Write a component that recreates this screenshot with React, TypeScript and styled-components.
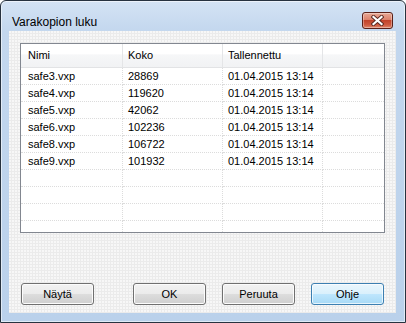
import React from 'react';
import styled, { createGlobalStyle } from 'styled-components';

const GlobalStyle = createGlobalStyle`
  html, body {
    margin: 0;
    padding: 0;
    background: #ffffff;
  }
  * {
    box-sizing: border-box;
  }
`;

const FONT = `"Liberation Sans", Arial, sans-serif`;

const backups = [
  { name: 'safe3.vxp', size: '28869', saved: '01.04.2015 13:14' },
  { name: 'safe4.vxp', size: '119620', saved: '01.04.2015 13:14' },
  { name: 'safe5.vxp', size: '42062', saved: '01.04.2015 13:14' },
  { name: 'safe6.vxp', size: '102236', saved: '01.04.2015 13:14' },
  { name: 'safe8.vxp', size: '106722', saved: '01.04.2015 13:14' },
  { name: 'safe9.vxp', size: '101932', saved: '01.04.2015 13:14' },
];

const Window = styled.div`
  width: 406px;
  height: 323px;
  display: flex;
  flex-direction: column;
  border: 1px solid #27323f;
  border-radius: 6px 6px 0 0;
  background: linear-gradient(180deg, #d4e3f4 0px, #c3d7ee 30px, #bad1eb 100%);
  box-shadow: inset 0 0 0 1px rgba(255, 255, 255, 0.55);
  font-family: ${FONT};
  overflow: hidden;
`;

const TitleBar = styled.div`
  height: 30px;
  flex: none;
  display: flex;
  justify-content: space-between;
  align-items: flex-start;
  padding: 0 12px 0 11px;
`;

const Title = styled.div`
  padding-top: 14px;
  font-size: 12px;
  line-height: 15px;
  color: #000000;
`;

const CloseButton = styled.div`
  margin-top: 11px;
  width: 31px;
  height: 17px;
  border: 1px solid #5a2018;
  border-radius: 3px;
  background: linear-gradient(180deg, #e8a996 0%, #dc826c 45%, #c2432a 50%, #cf5a40 80%, #e08a6e 100%);
  box-shadow: inset 0 0 0 1px rgba(255, 255, 255, 0.35);
  display: flex;
  align-items: center;
  justify-content: center;
`;

const Client = styled.div`
  flex: 1;
  margin: 0 9px 9px 8px;
  background-color: #ebebeb;
  background-image: radial-gradient(circle at 1px 1px, #f8f8f8 0.7px, transparent 0.9px);
  background-size: 3px 3px;
  display: flex;
  flex-direction: column;
  padding: 12px 11px 8px;
`;

const ListBox = styled.div`
  height: 190px;
  flex: none;
  border: 1px solid #828790;
  background: #ffffff;
  overflow: hidden;
`;

const COLUMNS = '102px 100px 100px 1fr';

const HeaderRow = styled.div`
  display: grid;
  grid-template-columns: ${COLUMNS};
  height: 24px;
  border-bottom: 1px solid #e2e3e5;
  background: linear-gradient(180deg, #ffffff 0%, #ffffff 45%, #f6f7f8 46%, #f1f2f4 100%);
`;

const HeaderCell = styled.div<{ $indent: number }>`
  padding-left: ${(p) => p.$indent}px;
  border-right: 1px solid #e4e5e7;
  font-size: 11px;
  line-height: 23px;
  color: #000000;
  white-space: nowrap;
  &:last-child {
    border-right: none;
  }
`;

const Row = styled.div`
  display: grid;
  grid-template-columns: ${COLUMNS};
  height: 17px;
`;

const Cell = styled.div<{ $indent: number }>`
  padding-left: ${(p) => p.$indent}px;
  border-bottom: 1px dotted #dcdcdc;
  border-right: 1px dotted #dcdcdc;
  font-size: 11px;
  line-height: 16px;
  color: #000000;
  white-space: nowrap;
  &:last-child {
    border-right: none;
  }
`;

const ButtonRow = styled.div`
  margin-top: auto;
  padding: 0 1px;
  display: flex;
  align-items: center;
`;

const ButtonGroup = styled.div`
  margin-left: auto;
  display: flex;
  gap: 16px;
`;

const Button = styled.button<{ $default?: boolean }>`
  width: 73px;
  height: 22px;
  padding: 0;
  border-radius: 3px;
  font-family: ${FONT};
  font-size: 11px;
  color: #000000;
  border: 1px solid ${(p) => (p.$default ? '#3c7fb1' : '#707070')};
  background: ${(p) =>
    p.$default
      ? 'linear-gradient(180deg, #eaf6fd 0%, #d9f0fc 50%, #bee6fd 51%, #a7d9f5 100%)'
      : 'linear-gradient(180deg, #f2f2f2 0%, #ebebeb 50%, #dddddd 51%, #cfcfcf 100%)'};
  box-shadow: inset 0 0 0 1px ${(p) => (p.$default ? 'rgba(255,255,255,0.7)' : '#fcfcfc')};
`;

const CloseGlyph = () => (
  <svg width="13" height="11" viewBox="0 0 13 11">
    <path d="M2.5 2 L10.5 9 M10.5 2 L2.5 9" stroke="#5a2a22" strokeWidth="4" strokeLinecap="square" />
    <path d="M2.5 2 L10.5 9 M10.5 2 L2.5 9" stroke="#ffffff" strokeWidth="2.2" strokeLinecap="square" />
  </svg>
);

const EMPTY_ROWS = 5;

export default function App() {
  return (
    <>
      <GlobalStyle />
      <Window>
        <TitleBar>
          <Title>Varakopion luku</Title>
          <CloseButton>
            <CloseGlyph />
          </CloseButton>
        </TitleBar>
        <Client>
          <ListBox>
            <HeaderRow>
              <HeaderCell $indent={7}>Nimi</HeaderCell>
              <HeaderCell $indent={5}>Koko</HeaderCell>
              <HeaderCell $indent={5}>Tallennettu</HeaderCell>
              <HeaderCell $indent={5} />
            </HeaderRow>
            {backups.map((b) => (
              <Row key={b.name}>
                <Cell $indent={7}>{b.name}</Cell>
                <Cell $indent={5}>{b.size}</Cell>
                <Cell $indent={5}>{b.saved}</Cell>
                <Cell $indent={5} />
              </Row>
            ))}
            {Array.from({ length: EMPTY_ROWS }).map((_, i) => (
              <Row key={'empty' + i}>
                <Cell $indent={7} />
                <Cell $indent={5} />
                <Cell $indent={5} />
                <Cell $indent={5} />
              </Row>
            ))}
          </ListBox>
          <ButtonRow>
            <Button>Näytä</Button>
            <ButtonGroup>
              <Button>OK</Button>
              <Button>Peruuta</Button>
              <Button $default>Ohje</Button>
            </ButtonGroup>
          </ButtonRow>
        </Client>
      </Window>
    </>
  );
}
